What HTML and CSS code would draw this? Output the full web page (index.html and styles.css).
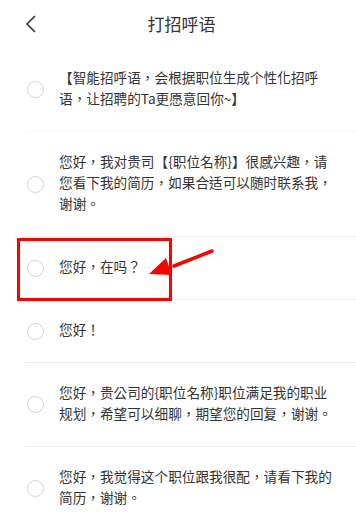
FILE: index.html
```html
<!DOCTYPE html>
<html lang="zh-CN">
<head>
<meta charset="utf-8">
<title>打招呼语</title>
<link rel="stylesheet" href="styles.css">
</head>
<body>
<div class="page">
  <header class="header">
    <svg class="back" width="12" height="18" viewBox="0 0 12 18"><path d="M10 1 L2 9 L10 17" fill="none" stroke="#333" stroke-width="1.6"/></svg>
    <h1 class="title">打招呼语</h1>
  </header>
  <ul class="list" lang="zh-TW">
    <li class="item item-first"><span class="radio"></span><p class="text">【智能招呼语，会根据职位生成个性化招呼语，让招聘的Ta更愿意回你~】</p></li>
    <li class="item"><span class="radio"></span><p class="text">您好，我对贵司【{职位名称}】很感兴趣，请您看下我的简历，如果合适可以随时联系我，谢谢。</p></li>
    <li class="item"><span class="radio"></span><p class="text">您好，在吗？</p></li>
    <li class="item"><span class="radio"></span><p class="text">您好！</p></li>
    <li class="item"><span class="radio"></span><p class="text">您好，贵公司的{职位名称}职位满足我的职业规划，希望可以细聊，期望您的回复，谢谢。</p></li>
    <li class="item"><span class="radio"></span><p class="text">您好，我觉得这个职位跟我很配，请看下我的简历，谢谢。</p></li>
  </ul>
  <div class="highlight"></div>
  <svg class="arrow" width="80" height="40" viewBox="0 0 80 40">
    <path d="M63 3 L25 18" stroke="#f00" stroke-width="3.5" stroke-linecap="round" fill="none"/>
    <path d="M0 26 L17 10 L23 27 Z" fill="#f00"/>
  </svg>
</div>
</body>
</html>
```
FILE: styles.css
```css
* { box-sizing: border-box; }
html, body { margin: 0; padding: 0; background: #fff; }
body {
  font-family: "Noto Sans CJK SC", "Noto Sans", sans-serif;
  color: #333;
  width: 356px;
  height: 518px;
  overflow: hidden;
}
.page { position: relative; }
.header {
  height: 48px;
  display: flex;
  align-items: center;
  justify-content: center;
  position: relative;
}
.back {
  position: absolute;
  left: 25px;
  top: 15px;
}
.title {
  margin: 0;
  padding-left: 7px;
  font-size: 17px;
  font-weight: normal;
  color: #333;
  line-height: 24px;
}
.list {
  list-style: none;
  margin: 0;
  padding: 0;
  font-family: "Noto Sans CJK TC", "Noto Sans CJK SC", sans-serif;
}
.item {
  display: flex;
  align-items: center;
  margin-left: 25px;
  padding: 20.5px 0;
  border-top: 1px solid #ececec;
}
.item-first { border-top: none; }
.item:nth-child(2) { border-top-color: #f7f7f7; }
.radio {
  flex: none;
  width: 17px;
  height: 17px;
  margin-left: 2px;
  border: 1px solid #d4d4d4;
  border-radius: 50%;
}
.text {
  margin: 0 0 0 15px;
  width: 278px;
  font-size: 13.65px;
  line-height: 21px;
  color: #333;
  position: relative;
  top: -2px;
}
.highlight {
  position: absolute;
  left: 17px;
  top: 238px;
  width: 155px;
  height: 63px;
  border: 3px solid #f00;
}
.arrow {
  position: absolute;
  left: 149px;
  top: 248px;
}
```
